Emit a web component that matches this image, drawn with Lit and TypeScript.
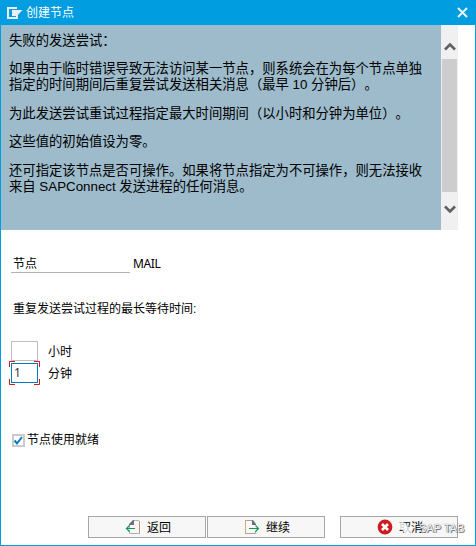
import { LitElement, html, svg, css } from "lit";
import { customElement } from "lit/decorators.js";

const paragraphs: string[][] = [
  ["失败的发送尝试："],
  [
    "如果由于临时错误导致无法访问某一节点，则系统会在为每个节点单独",
    "指定的时间期间后重复尝试发送相关消息（最早 10 分钟后）。",
  ],
  ["为此发送尝试重试过程指定最大时间期间（以小时和分钟为单位）。"],
  ["这些值的初始值设为零。"],
  [
    "还可指定该节点是否可操作。如果将节点指定为不可操作，则无法接收",
    "来自 SAPConnect 发送进程的任何消息。",
  ],
];

const page = (shape: unknown) => html`<svg width="16" height="16" viewBox="0 0 16 16" fill="none">
  ${shape}
</svg>`;

const backIcon = page(svg`
  <path d="M4.5 6V9M4.5 11V14.5H14M8 1.5H14" stroke="#a3b4bd"/>
  <path d="M14.5 2V14.5" stroke="#c98d78"/>
  <path d="M4 6V5L8 1H9V6Z" fill="#6b6f78"/>
  <path d="M1 9.5H10M4.5 6.5L1.5 9.5L4.5 12.5" stroke="#119a4b" stroke-width="1.2"/>`);

const nextIcon = page(svg`
  <path d="M2 14.5H11.5V12M2 1.5H9" stroke="#a3a3a3"/>
  <path d="M1.5 1V15" stroke="#d9a878"/>
  <path d="M8 1H9L12 5V6H8Z" fill="#6b6f78"/>
  <path d="M5 9.5H15M11.5 6.5L14.5 9.5L11.5 12.5" stroke="#119a4b" stroke-width="1.2"/>`);

const cancelIcon = page(svg`
  <circle cx="8" cy="8" r="7.4" fill="#cf1b20"/>
  <path d="M5 5L11 11M11 5L5 11" stroke="#fff" stroke-width="2.6"/>`);

@customElement("app-root")
export class AppRoot extends LitElement {
  static styles = css`
    :host {
      display: flex;
      flex-direction: column;
      box-sizing: border-box;
      width: 476px;
      height: 546px;
      border: 1px solid #009de0;
      border-top: 0;
      background: #fff;
      color: #000;
      font: 12px/16px "Liberation Sans", "Noto Sans CJK SC", sans-serif;
      text-spacing-trim: space-all;
      white-space: nowrap;
      overflow: hidden;
    }
    * { box-sizing: border-box; }
    svg { display: block; flex: none; }
    .title {
      display: flex;
      align-items: center;
      height: 25px;
      flex: none;
      padding: 0 7px 0 6px;
      background: #009de0;
      color: #fff;
    }
    .title span { flex: 1; margin-left: 3px; }
    .help { display: flex; height: 205px; width: 457px; flex: none; }
    .text {
      flex: 1;
      background: #9dbbcb;
      padding: 8px 0 0 8px;
      font-size: 13.33px;
    }
    .para { margin-bottom: 12.4px; }
    .bar {
      width: 17px;
      background: #f0f0f0;
      display: flex;
      flex-direction: column;
      align-items: center;
    }
    .arrow { display: flex; align-items: center; justify-content: center; height: 34px; padding-top: 9px; }
    .arrow.down { height: 33px; padding: 0; }
    .thumb { width: 15px; height: 133px; background: #cdcdcd; }
    .form { padding: 25px 0 0 10px; flex: 1; }
    .row { display: flex; align-items: center; }
    .name { width: 119px; height: 18px; border-bottom: 1px solid #b3b3b3; padding-left: 2px; line-height: 19px; }
    .value { margin-left: 3px; font-family: "Noto Sans", sans-serif; letter-spacing: -0.4px; }
    .heading { margin: 28px 0 24px 2px; }
    .input { width: 27px; height: 20px; border: 1px solid #bfbfbf; padding-left: 2px; line-height: 18px; font-family: "Noto Sans", sans-serif; }
    .unit { margin-left: 10px; padding-top: 2px; }
    .input.focus { position: relative; border-color: #007cc0; color: #333; }
    .corners { position: absolute; left: -3px; top: -3px; }
    .second { margin-top: 2px; }
    .check { margin: 49px 0 0 1px; }
    .check span { margin-left: 2px; }
    .buttons { display: flex; margin: 0 0 7px 87px; }
    .button {
      width: 118px;
      height: 22px;
      border: 1px solid #a6a6a6;
      background: #f7f7f7;
      display: flex;
      align-items: center;
      padding-left: 36px;
      gap: 6px;
    }
    .button span { padding-top: 1px; }
    .button + .button { margin-left: 1px; }
    .button.cancel { margin-left: 15px; position: relative; }
    .mark { position: absolute; left: 55px; top: 2px; display: flex; align-items: center; font-size: 11px; }
    .mark span { margin-left: 7px; color: #f4f4f4; text-shadow: 1px 1px 0 #777, 0 0 1px #555; }
  `;

  render() {
    return html`
      <div class="title">
        <svg width="16" height="12" viewBox="0 0 16 12">
          <path d="M10 1H1V11H10V8" fill="none" stroke="#e8eef2" stroke-width="2"/>
          <path d="M5 3H15.5L10 9H5Z" fill="#e8eef2"/>
        </svg>
        <span>创建节点</span>
        <svg width="11" height="11" viewBox="0 0 11 11"><path d="M1 1L10 10M10 1L1 10" stroke="#e9f2f7" stroke-width="2"/></svg>
      </div>
      <div class="help">
        <div class="text">
          ${paragraphs.map((p) => html`<div class="para">${p.map((l) => html`<div>${l}</div>`)}</div>`)}
        </div>
        <div class="bar">
          <div class="arrow"><svg width="12" height="10" viewBox="0 0 12 10"><path d="M1 7.5L6 2.5L11 7.5" fill="none" stroke="#5f5f5f" stroke-width="2.6"/></svg></div>
          <div class="thumb"></div>
          <div class="arrow down"><svg width="12" height="10" viewBox="0 0 12 10"><path d="M1 2.5L6 7.5L11 2.5" fill="none" stroke="#5f5f5f" stroke-width="2.6"/></svg></div>
        </div>
      </div>
      <div class="form">
        <div class="row"><div class="name">节点</div><div class="value">MAIL</div></div>
        <div class="heading">重复发送尝试过程的最长等待时间:</div>
        <div class="row"><div class="input"></div><div class="unit">小时</div></div>
        <div class="row second">
          <div class="input focus">1
            <svg class="corners" width="31" height="24" viewBox="0 0 31 24"><path d="M.5 6V.5H6M25 .5H30.5V6M30.5 18V23.5H25M6 23.5H.5V18" fill="none" stroke="#d9141a"/></svg>
          </div>
          <div class="unit">分钟</div>
        </div>
        <div class="row check">
          <svg width="13" height="13" viewBox="0 0 13 13"><rect x="1" y="1" width="11" height="11" fill="#fff" stroke="#cbcbcb" stroke-width="2"/><path d="M2.5 6.5L5 9.5L10 3" fill="none" stroke="#007cc0" stroke-width="2"/></svg>
          <span>节点使用就绪</span>
        </div>
      </div>
      <div class="buttons">
        <div class="button">${backIcon}<span>返回</span></div>
        <div class="button">${nextIcon}<span>继续</span></div>
        <div class="button cancel">${cancelIcon}<span>取消</span>
          <div class="mark">
            <svg width="16" height="14" viewBox="0 0 16 14"><ellipse cx="6" cy="5" rx="5" ry="4" fill="#fff" opacity=".8"/><ellipse cx="11" cy="9" rx="4" ry="3.4" fill="#fff" opacity=".8"/></svg>
            <span>SAP TAB</span>
          </div>
        </div>
      </div>
    `;
  }
}
